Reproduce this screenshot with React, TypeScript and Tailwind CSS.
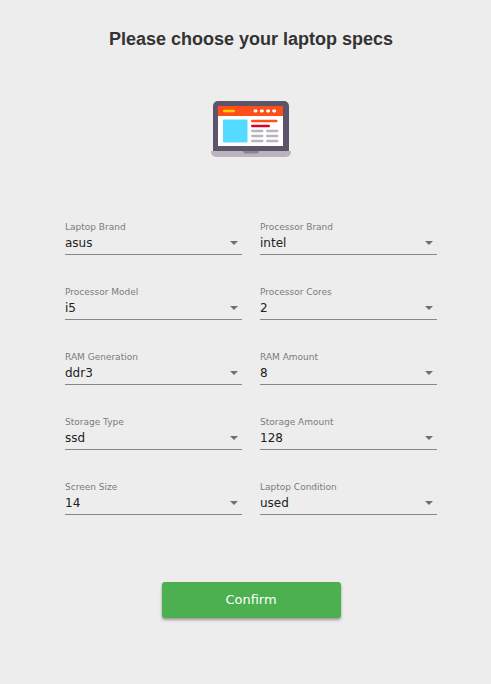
import { useId, useState } from "react";

type Field = { label: string; options: string[] };

const fields: Field[] = [
  { label: "Laptop Brand", options: ["asus", "dell", "hp", "lenovo"] },
  { label: "Processor Brand", options: ["intel", "amd"] },
  { label: "Processor Model", options: ["i5", "i3", "i7"] },
  { label: "Processor Cores", options: ["2", "4", "8"] },
  { label: "RAM Generation", options: ["ddr3", "ddr4"] },
  { label: "RAM Amount", options: ["8", "4", "16"] },
  { label: "Storage Type", options: ["ssd", "hdd"] },
  { label: "Storage Amount", options: ["128", "256", "512"] },
  { label: "Screen Size", options: ["14", "13", "15"] },
  { label: "Laptop Condition", options: ["used", "new"] },
];

function SelectField({ label, options }: Field) {
  const id = useId();
  const [value, setValue] = useState(options[0]);
  return (
    <div className="flex flex-col">
      <label htmlFor={id} className="text-[9px] leading-3 text-[#7b7b7b]">
        {label}
      </label>
      <div className="grid items-center border-b border-[#868686] pb-0.5">
        <select
          id={id}
          value={value}
          onChange={(e) => setValue(e.target.value)}
          className="col-start-1 row-start-1 h-[19px] w-full appearance-none bg-transparent pr-4 text-[12px] leading-4 text-[#212121] outline-none"
        >
          {options.map((o) => (
            <option key={o}>{o}</option>
          ))}
        </select>
        <svg
          viewBox="0 0 8 4"
          className="pointer-events-none col-start-1 row-start-1 mr-1 h-1 w-2 justify-self-end"
          aria-hidden="true"
        >
          <path d="M0 0h8L4 4z" fill="#6f6f6f" />
        </svg>
      </div>
    </div>
  );
}

function LaptopIcon() {
  return (
    <svg viewBox="0 0 80 56" className="h-14 w-20" aria-hidden="true">
      <path d="M2 51V5a5 5 0 0 1 5-5h66a5 5 0 0 1 5 5v46z" fill="#5c546a" />
      <path d="M7 14h65v31H7z" fill="#fff" />
      <path d="M7 5h65v10H7z" fill="#ff4f19" />
      <rect x="12" y="8.7" width="12" height="2.6" rx="1.2" fill="#ffd100" />
      <g fill="#fff">
        <rect x="42.5" y="8.6" width="4" height="2.8" rx="1.4" />
        <rect x="48.8" y="8.6" width="4" height="2.8" rx="1.4" />
        <rect x="55" y="8.6" width="4" height="2.8" rx="1.4" />
        <rect x="61.2" y="8.6" width="4" height="2.8" rx="1.4" />
      </g>
      <rect x="12" y="18.5" width="24.5" height="23" rx="1" fill="#54dbff" />
      <rect x="40" y="18.7" width="26.5" height="2.6" rx="1.2" fill="#ff4f19" />
      <rect x="40" y="23.7" width="19" height="2.6" rx="1.2" fill="#e00021" />
      <g fill="#b8b5bf">
        <rect x="40" y="28.8" width="12.5" height="2.4" rx="1.1" />
        <rect x="55" y="28.8" width="12.5" height="2.4" rx="1.1" />
        <rect x="40" y="33.8" width="12.5" height="2.4" rx="1.1" />
        <rect x="55" y="33.8" width="12.5" height="2.4" rx="1.1" />
        <rect x="40" y="38.8" width="12.5" height="2.4" rx="1.1" />
        <rect x="55" y="38.8" width="12.5" height="2.4" rx="1.1" />
      </g>
      <path d="M0 50h80v1a5 5 0 0 1-5 5H5a5 5 0 0 1-5-5z" fill="#b8b5bf" />
      <path d="M32 50h16a2.5 2.5 0 0 1-2.5 2.5h-11A2.5 2.5 0 0 1 32 50z" fill="#8a8594" />
    </svg>
  );
}

export default function App() {
  return (
    <main className="flex min-h-screen flex-col bg-[#ededed] pt-[27px] pr-[54px] pb-16 pl-[65px] font-['DejaVu_Sans',sans-serif]">
      <h1 className="text-center font-['Liberation_Sans',Arial,sans-serif] text-[18px] leading-6 font-bold text-[#333333]">
        Please choose your laptop specs
      </h1>
      <div className="mt-[50px] flex justify-center">
        <LaptopIcon />
      </div>
      <form className="mt-16 flex flex-col" onSubmit={(e) => e.preventDefault()}>
        <div className="grid grid-cols-2 gap-x-[18px] gap-y-[31px]">
          {fields.map((f) => (
            <SelectField key={f.label} {...f} />
          ))}
        </div>
        <button
          type="submit"
          className="mt-[67px] h-9 w-[179px] self-center rounded-[3px] bg-[#4caf50] text-[13px] text-white shadow-[0_2px_3px_rgba(0,0,0,0.35)]"
        >
          Confirm
        </button>
      </form>
    </main>
  );
}
